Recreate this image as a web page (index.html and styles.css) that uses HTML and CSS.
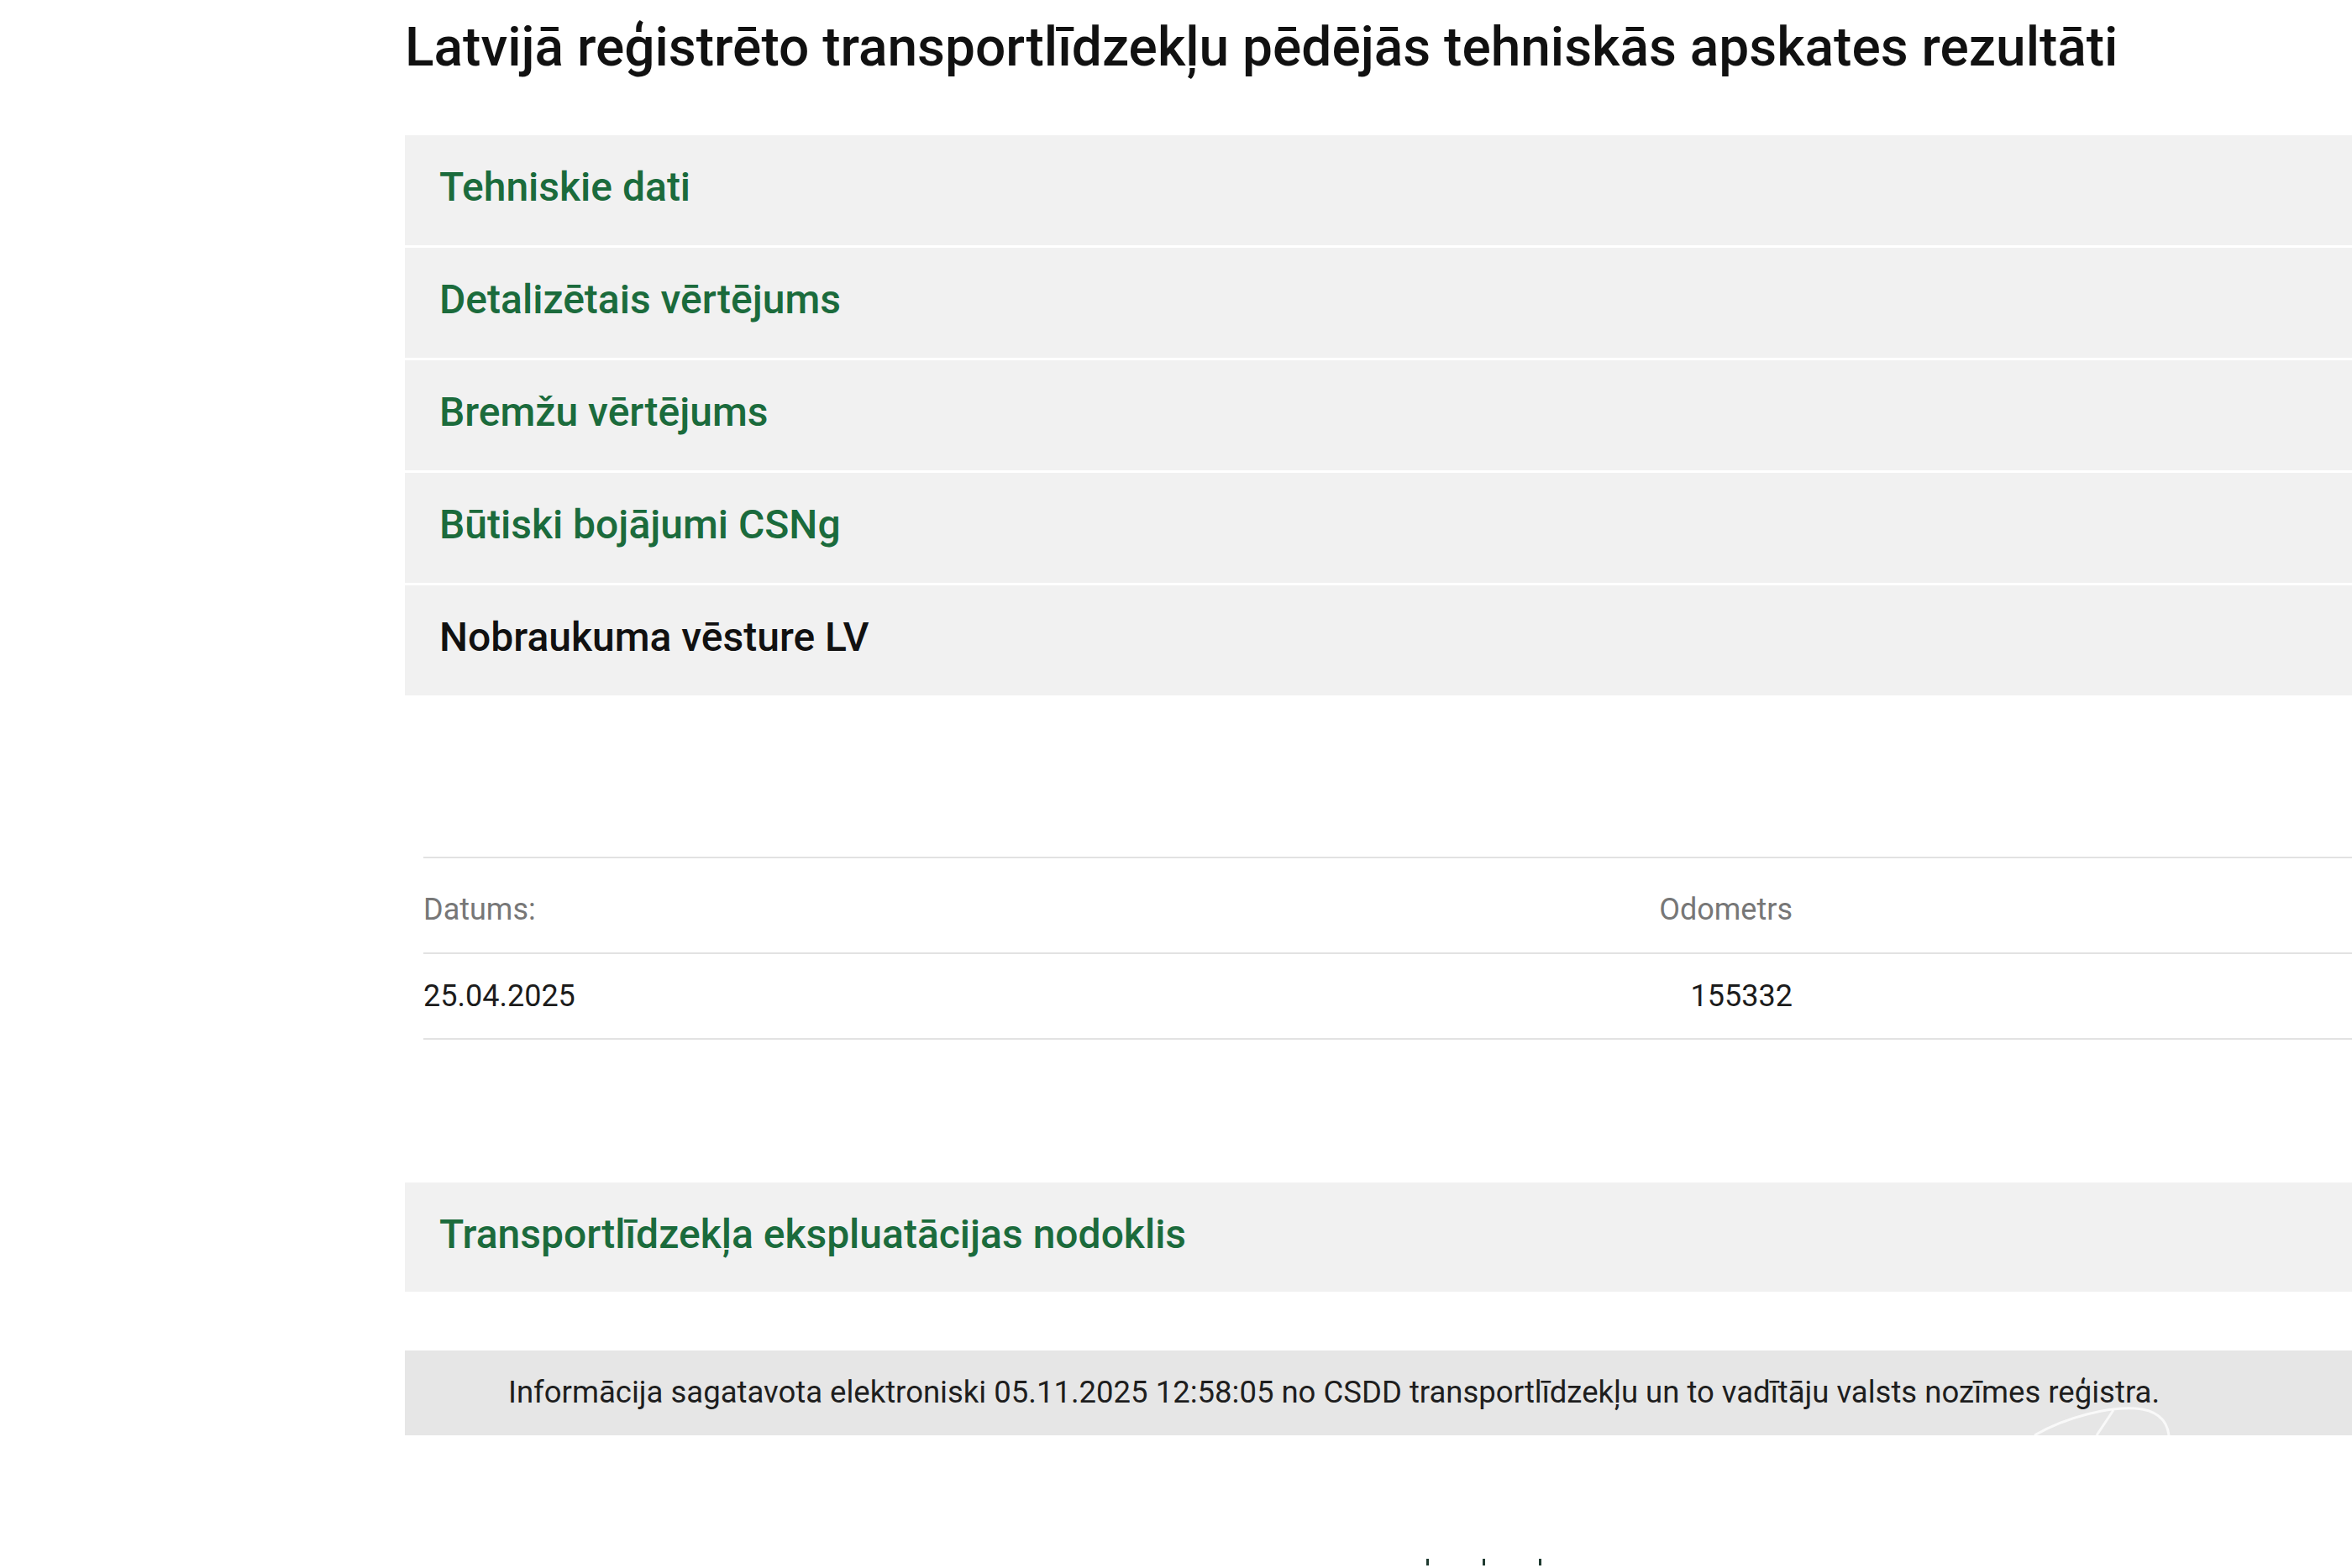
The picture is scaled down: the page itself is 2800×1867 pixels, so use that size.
FILE: index.html
```html
<!DOCTYPE html>
<html lang="lv">
<head>
<meta charset="utf-8">
<title>Tehniskās apskates rezultāti</title>
<link rel="stylesheet" href="styles.css">
</head>
<body>
<main class="page">
  <h1 class="title">Latvijā reģistrēto transportlīdzekļu pēdējās tehniskās apskates rezultāti</h1>

  <section class="accordion">
    <div class="acc-item"><span class="acc-label">Tehniskie dati</span></div>
    <div class="acc-item"><span class="acc-label">Detalizētais vērtējums</span></div>
    <div class="acc-item"><span class="acc-label">Bremžu vērtējums</span></div>
    <div class="acc-item"><span class="acc-label">Būtiski bojājumi CSNg</span></div>
    <div class="acc-item acc-active"><span class="acc-label">Nobraukuma vēsture LV</span></div>
  </section>

  <section class="mileage">
    <div class="m-row m-head">
      <div class="m-date">Datums:</div>
      <div class="m-odo">Odometrs</div>
      <div class="m-rest"></div>
    </div>
    <div class="m-row">
      <div class="m-date">25.04.2025</div>
      <div class="m-odo">155332</div>
      <div class="m-rest"></div>
    </div>
  </section>

  <section class="accordion tax">
    <div class="acc-item"><span class="acc-label">Transportlīdzekļa ekspluatācijas nodoklis</span></div>
  </section>

  <footer class="info">
    <p class="info-text">Informācija sagatavota elektroniski 05.11.2025 12:58:05 no CSDD transportlīdzekļu un to vadītāju valsts nozīmes reģistra.</p>
    <svg class="watermark" width="180" height="40" viewBox="0 0 180 40" aria-hidden="true">
      <path d="M2 40 C 40 18, 90 6, 122 8 C 150 10, 160 24, 162 40" fill="none" stroke="#ffffff" stroke-width="3" opacity="0.75"/>
      <path d="M76 40 L 96 10" fill="none" stroke="#ffffff" stroke-width="3" opacity="0.75"/>
    </svg>
  </footer>

  <div class="cutoff">
    <span class="tick"></span><span class="tick"></span><span class="tick"></span>
  </div>
</main>
</body>
</html>
```

FILE: styles.css
```css
html, body {
  margin: 0;
  padding: 0;
  background: #ffffff;
  overflow: hidden;
}

body {
  font-family: Roboto, "Noto Sans", "Liberation Sans", sans-serif;
  color: #111111;
}

.page {
  padding-left: 482px;
  height: 1867px;
  box-sizing: border-box;
}

.title {
  margin: 18px 0 0 0;
  font-size: 64px;
  line-height: 77px;
  font-weight: 500;
  color: #111111;
  letter-spacing: 0;
}

.accordion {
  margin-top: 66px;
  display: flex;
  flex-direction: column;
  gap: 3px;
}

.acc-item {
  height: 131px;
  background: #f1f1f1;
  display: flex;
  align-items: center;
  padding: 0 0 9px 41px;
  box-sizing: border-box;
}

.acc-label {
  font-size: 48px;
  font-weight: 500;
  color: #1b6b3c;
}

.acc-active .acc-label {
  color: #111111;
}

.mileage {
  margin: 192px 0 0 22px;
  border-top: 2px solid #e2e2e2;
}

.m-row {
  display: grid;
  grid-template-columns: 1030px 600px 1fr;
  align-items: center;
  border-bottom: 2px solid #e2e2e2;
  font-size: 36px;
}

.m-head {
  height: 114px;
  color: #777777;
  padding-top: 10px;
  box-sizing: border-box;
}

.m-row:not(.m-head) {
  height: 102px;
  color: #1c1c1c;
  box-sizing: border-box;
}

.m-odo {
  text-align: right;
}

.tax {
  margin-top: 170px;
}

.tax .acc-item {
  height: 130px;
  padding-bottom: 7px;
}

.info {
  position: relative;
  overflow: hidden;
  margin-top: 70px;
  height: 101px;
  background: #e6e6e6;
  display: flex;
  align-items: center;
  padding-left: 123px;
}

.info-text {
  margin: 0 0 2px 0;
  font-size: 36.5px;
  color: #1e1e1e;
}

.watermark {
  position: absolute;
  left: 1938px;
  top: 61px;
}

.cutoff {
  display: flex;
  gap: 64px;
  margin: 147px 0 0 1216px;
}

.tick {
  width: 3px;
  height: 8px;
  background: #1f3a30;
}
```
